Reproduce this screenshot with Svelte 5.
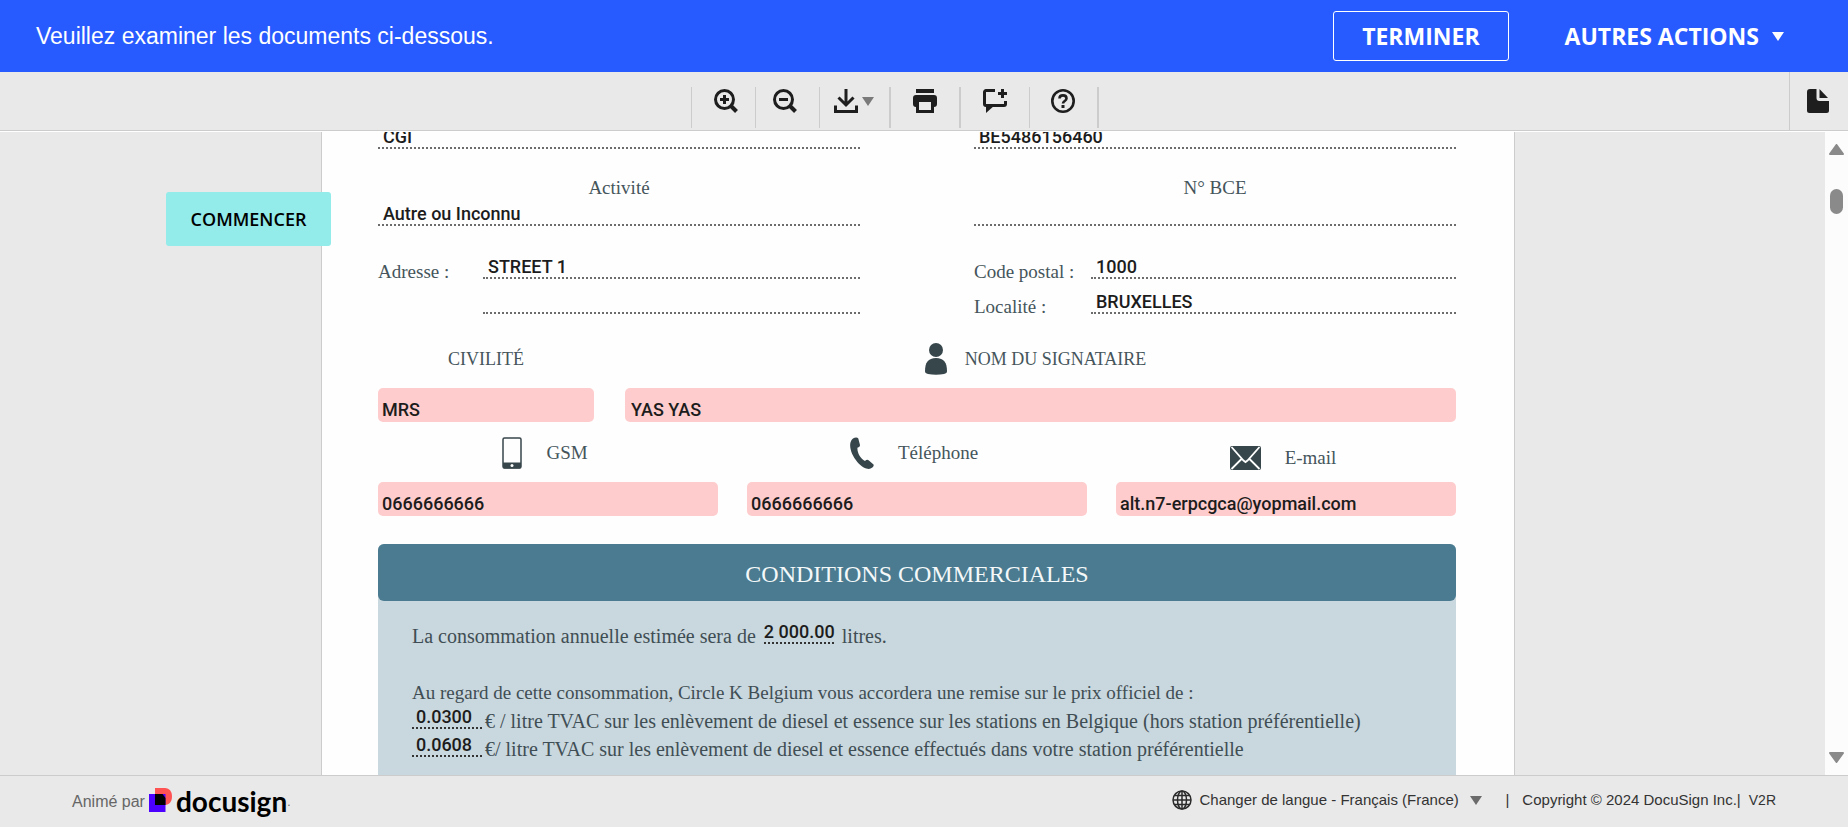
<script>
  const contacts = [
    { id: 'gsm', label: 'GSM', icon: 'mobile', type: 'tel', value: '0666666666' },
    { id: 'tel', label: 'Téléphone', icon: 'phone', type: 'tel', value: '0666666666' },
    { id: 'mail', label: 'E-mail', icon: 'mail', type: 'email', value: 'alt.n7-erpcgca@yopmail.com' }
  ];
</script>

<div class="app">
  <header class="banner">
    <p>Veuillez examiner les documents ci-dessous.</p>
    <div class="banner-actions">
      <button class="finish" type="button">TERMINER</button>
      <button class="more" type="button">
        AUTRES ACTIONS
        <svg width="12" height="9" viewBox="0 0 12 9" aria-hidden="true"><path d="M0 0h12L6 9z" fill="#fff" /></svg>
      </button>
    </div>
  </header>

  <div class="toolbar">
    <div class="tools">
      <button class="tool zoom-in" type="button" aria-label="Zoom avant">
        <svg width="24" height="24" viewBox="0 0 24 24" fill="none" stroke="#1e1e1e" stroke-width="3">
          <circle cx="10.500" cy="10.500" r="9" />
          <path d="M17 17l5.500 5.500" stroke-width="4" />
          <path d="M10.500 6v9M6 10.500h9" />
        </svg>
      </button>
      <button class="tool zoom-out" type="button" aria-label="Zoom arrière">
        <svg width="24" height="24" viewBox="0 0 24 24" fill="none" stroke="#1e1e1e" stroke-width="3">
          <circle cx="10.500" cy="10.500" r="9" />
          <path d="M17 17l5.500 5.500" stroke-width="4" />
          <path d="M6 10.500h9" />
        </svg>
      </button>
      <button class="tool wide" type="button" aria-label="Télécharger">
        <svg width="24" height="24" viewBox="0 0 24 24" fill="none" stroke="#1e1e1e" stroke-width="3">
          <path d="M1.500 16.500v6h21v-6" />
          <path d="M12 0v16M4.500 8.500l7.500 7.500 7.500-7.500" />
        </svg>
        <svg class="caret" width="12" height="9" viewBox="0 0 12 9"><path d="M0 0h12L6 9z" fill="#7a7a7a" /></svg>
      </button>
      <button class="tool wide" type="button" aria-label="Imprimer">
        <svg width="24" height="24" viewBox="0 0 24 24" fill="#1e1e1e">
          <path d="M3 0h18v4H3z" />
          <path fill-rule="evenodd" d="M3 6h18a3 3 0 0 1 3 3v6a3 3 0 0 1-3 3v6H3v-6a3 3 0 0 1-3-3V9a3 3 0 0 1 3-3zm3 7v8h12v-8z" />
        </svg>
      </button>
      <button class="tool wide" type="button" aria-label="Commentaire">
        <svg width="24" height="24" viewBox="0 0 24 24" fill="none" stroke="#1e1e1e" stroke-width="3">
          <path d="M12 1.500H3a1.500 1.500 0 0 0-1.500 1.500v12A1.500 1.500 0 0 0 3 16.500h18a1.500 1.500 0 0 0 1.500-1.500v-3" />
          <path d="M19.500 0v9M15 4.500h9" />
          <path d="M3 16h9l-9 8z" fill="#1e1e1e" stroke="none" />
        </svg>
      </button>
      <button class="tool wide last" type="button" aria-label="Aide">
        <svg width="24" height="24" viewBox="0 0 24 24" fill="none" stroke="#1e1e1e">
          <circle cx="12" cy="12" r="10.700" stroke-width="2.600" />
          <path d="M8.500 9.500c0-4.200 7-4.200 7 0 0 2.500-3.500 2.600-3.500 5" stroke-width="2.600" />
          <path d="M12 16v3" stroke-width="3" />
        </svg>
      </button>
    </div>
    <button class="panel-toggle" type="button" aria-label="Documents">
      <svg width="22" height="24" viewBox="0 0 22 24" fill="#1e1e1e">
        <path d="M3 0h6.500v9a3 3 0 0 0 3 3H22v9.500a2.500 2.500 0 0 1-2.500 2.500h-17A2.500 2.500 0 0 1 0 21.500V3a3 3 0 0 1 3-3z" />
        <path d="M12.500 0L21 9h-8.500z" />
      </svg>
    </button>
  </div>

  <main class="viewer">
    <div class="canvas">
      <aside class="gutter"><button class="start" type="button">COMMENCER</button></aside>

      <article class="page">
        <div class="pair first">
          <div class="field">CGI</div>
          <div class="field">BE5486156460</div>
        </div>
        <div class="pair headed">
          <div>
            <div class="label center">Activité</div>
            <div class="field">Autre ou Inconnu</div>
          </div>
          <div>
            <div class="label center">N° BCE</div>
            <div class="field"></div>
          </div>
        </div>
        <div class="pair address">
          <div class="lines street">
            <span class="label">Adresse :</span>
            <div class="field">STREET 1</div>
            <span></span>
            <div class="field"></div>
          </div>
          <div class="lines city">
            <span class="label">Code postal :</span>
            <div class="field">1000</div>
            <span class="label">Localité :</span>
            <div class="field">BRUXELLES</div>
          </div>
        </div>

        <div class="signer">
          <div class="entry">
            <label class="label caption" for="civ">CIVILITÉ</label>
            <input id="civ" readonly value="MRS" />
          </div>
          <div class="entry">
            <label class="label caption name" for="nom">
              <svg width="22" height="32" viewBox="0 0 22 32" fill="#37464b">
                <ellipse cx="11" cy="7" rx="7" ry="7" />
                <path d="M0 28c0-8 3-13 11-13s11 5 11 13c0 2-1 2.500-3 3-5 1-11 1-16 0-2-.5-3-1-3-3z" />
              </svg>
              NOM DU SIGNATAIRE
            </label>
            <input id="nom" class="inset" readonly value="YAS YAS" />
          </div>
        </div>

        <div class="contacts">
          {#each contacts as c}
            <div class="entry">
              <label class="label caption" class:low={c.icon === 'mail'} for={c.id}>
                {#if c.icon === 'mobile'}
                  <svg width="20" height="32" viewBox="0 0 20 32">
                    <rect x="1" y="1" width="18" height="30" rx="1.500" fill="none" stroke="#37464b" stroke-width="1.500" />
                    <path d="M1 25.500h18V30a1.500 1.500 0 0 1-1.500 1.500h-15A1.500 1.500 0 0 1 1 30z" fill="#37464b" />
                    <circle cx="10" cy="28.500" r="1.500" fill="#fff" />
                  </svg>
                {:else if c.icon === 'phone'}
                  <svg width="24" height="32" viewBox="0 0 24 32" fill="#37464b">
                    <path d="M3 1.500C5 .3 7.500.3 8.300 1.500L10 8c0 1.500-.8 2-2.600 2.700C7.200 16 10.500 21.500 15 24c1.300-1.300 2.600-1.600 3.900-.6l4.600 4.200c.8 1.200-.8 3.400-3.500 4.200-3.500.6-8.500-2-12.500-6.600C2.500 19.300-.3 12.500.2 7 .5 4.500 1.500 2.500 3 1.500z" />
                  </svg>
                {:else}
                  <svg width="31" height="24" viewBox="0 0 31 24">
                    <rect width="31" height="24" rx="2" fill="#37464b" />
                    <path d="M1.500 1l12 13.500 2 1.500 2-1.500L29.500 1M1.500 23l10.500-10.500M29.500 23L19 12.500" fill="none" stroke="#fff" stroke-width="1.800" />
                  </svg>
                {/if}
                {c.label}
              </label>
              <input id={c.id} type={c.type} readonly value={c.value} />
            </div>
          {/each}
        </div>

        <section class="terms">
          <h2>CONDITIONS COMMERCIALES</h2>
          <div class="terms-body">
            <p class="usage">La consommation annuelle estimée sera de <b>2 000.00</b> litres.</p>
            <p class="intro">Au regard de cette consommation, Circle K Belgium vous accordera une remise sur le prix officiel de :</p>
            <p class="rate"><b>0.0300</b> € / litre TVAC sur les enlèvement de diesel et essence sur les stations en Belgique (hors station préférentielle)</p>
            <p class="rate"><b>0.0608</b> €/ litre TVAC sur les enlèvement de diesel et essence effectués dans votre station préférentielle</p>
          </div>
        </section>
      </article>
    </div>

    <div class="scrollbar" aria-hidden="true">
      <svg width="15" height="11" viewBox="0 0 15 11"><path d="M7.500 1L14 10H1z" fill="#8a8a8a" stroke="#8a8a8a" stroke-width="2" stroke-linejoin="round" /></svg>
      <span class="thumb"></span>
      <svg class="down" width="15" height="11" viewBox="0 0 15 11"><path d="M7.500 10L14 1H1z" fill="#8a8a8a" stroke="#8a8a8a" stroke-width="2" stroke-linejoin="round" /></svg>
    </div>
  </main>

  <footer>
    <div class="powered">
      <span>Animé par</span>
      <svg width="23" height="24" viewBox="0 0 23 24">
        <path d="M6 0h10c4.500 0 7 3.600 7 8.500S20.500 17 16 17H6z" fill="#ff5252" />
        <path d="M0 6h16.500v18H0z" fill="#4c00ff" />
        <path d="M6 6h7.500l3 4v7H6z" fill="#000" />
      </svg>
      <strong>docusign</strong><span class="mark">.</span>
    </div>
    <div class="legal">
      <label class="language">
        <svg width="20" height="20" viewBox="0 0 20 20" fill="none" stroke="#2b2b2b" stroke-width="1.500">
          <circle cx="10" cy="10" r="9" />
          <ellipse cx="10" cy="10" rx="4.500" ry="9" />
          <path d="M10 1v18M1 10h18M2.500 5.500h15M2.500 14.500h15" />
        </svg>
        <select aria-label="Changer de langue">
          <option>Changer de langue - Français (France)</option>
        </select>
        <svg width="12" height="9" viewBox="0 0 12 9"><path d="M0 0h12L6 9z" fill="#6b6b6b" /></svg>
      </label>
      <span class="bar">|</span>
      <span>Copyright © 2024 DocuSign Inc.|</span>
      <small>V2R</small>
    </div>
  </footer>
</div>

<style>
  :global(body) {
    margin: 0;
  }

  .app {
    display: flex;
    flex-direction: column;
    height: 100vh;
    overflow: hidden;
    background: #e9e9e9;
    font-family: 'Liberation Sans', Arial, sans-serif;
    color: #333;
  }

  .app * {
    box-sizing: border-box;
  }

  svg {
    display: block;
    flex: none;
  }

  button {
    border: 0;
    padding: 0;
    background: none;
    cursor: pointer;
  }

  .banner {
    display: flex;
    align-items: center;
    justify-content: space-between;
    flex: none;
    height: 72px;
    padding: 0 64px 0 36px;
    background: #285bff;
    color: #fff;
  }

  .banner p {
    margin: 0;
    font-size: 23px;
    line-height: 28px;
  }

  .banner-actions {
    display: flex;
    gap: 56px;
  }

  .banner button {
    height: 50px;
    color: #fff;
    font: 700 23px/28px 'Open Sans', 'Noto Sans', sans-serif;
  }

  .banner .finish {
    padding: 0 28px;
    border: 1px solid #fff;
    border-radius: 3px;
  }

  .more {
    display: flex;
    align-items: center;
    gap: 13px;
  }

  .toolbar {
    display: flex;
    flex: none;
    height: 60px;
    border-bottom: 1px solid #fff;
    box-shadow: inset 0 -1px #ccc;
  }

  .tools {
    display: flex;
    flex: 1;
    justify-content: center;
    padding: 15px 0 3px;
  }

  .tool {
    display: flex;
    align-items: flex-start;
    justify-content: center;
    gap: 4px;
    width: 64px;
    padding-top: 2px;
    border-left: 1px solid #ccc;
  }

  .zoom-in {
    padding-left: 5px;
  }

  .zoom-out {
    padding-right: 5px;
  }

  .wide {
    width: 70px;
  }

  .wide + .wide {
    border-left-width: 2px;
  }

  .tool.last {
    border-right: 2px solid #ccc;
    border-left-width: 1px;
  }

  .caret {
    margin-top: 8px;
  }

  .panel-toggle {
    display: flex;
    justify-content: center;
    width: 59px;
    padding: 17px 2px 0 0;
    border-left: 1px solid #ccc;
  }

  .viewer {
    display: flex;
    flex: 1;
    min-height: 0;
  }

  .canvas {
    display: grid;
    flex: 1;
    grid-template-columns: minmax(0, 1fr) minmax(0, 1194px) minmax(0, 1fr);
    padding-left: 11px;
    overflow: hidden;
  }

  .gutter {
    position: relative;
    z-index: 1;
  }

  .start {
    position: absolute;
    top: 60px;
    right: -10px;
    width: 165px;
    height: 54px;
    border-radius: 3px;
    background: #93ebea;
    color: #000;
    font: 600 18px/24px 'Open Sans', 'Noto Sans', sans-serif;
  }

  .page {
    min-height: 0;
    padding: 0 58px 0 56px;
    border: solid #ccc;
    border-width: 0 1px;
    background: #fefefe;
    overflow: hidden;
  }

  .label {
    color: #45555b;
    font: 19px/24px 'Liberation Serif', 'Times New Roman', serif;
    white-space: nowrap;
  }

  .center {
    text-align: center;
  }

  .field {
    height: 23px;
    padding-left: 5px;
    border-bottom: 2px dotted #6c6c6c;
    color: #1c1c1c;
    font: 500 18px/21px Roboto, sans-serif;
  }

  .pair {
    display: grid;
    grid-template-columns: 1fr 1fr;
    gap: 114px;
  }

  .first {
    margin-top: -6px;
  }

  .headed {
    margin-top: 27px;
  }

  .headed .label {
    margin-bottom: 3px;
  }

  .address {
    margin-top: 30px;
  }

  .lines {
    display: grid;
    grid-template-rows: 23px 23px;
    row-gap: 12px;
  }

  .lines .label {
    padding-top: 4px;
  }

  .street {
    grid-template-columns: 105px 1fr;
  }

  .city {
    grid-template-columns: 117px 1fr;
  }

  .signer {
    display: grid;
    grid-template-columns: 216px 1fr;
    gap: 31px;
    margin-top: 28px;
  }

  .signer .label {
    font-size: 18px;
  }

  .caption {
    display: flex;
    align-items: center;
    justify-content: center;
    gap: 24px;
    height: 34px;
    margin-bottom: 12px;
  }

  .caption.name {
    gap: 18px;
    padding-right: 10px;
  }

  .contacts .caption {
    padding-right: 6px;
  }

  .caption.low {
    align-items: flex-end;
  }

  input {
    display: block;
    width: 100%;
    height: 34px;
    padding: 9px 4px 0;
    border: 0;
    border-radius: 5px;
    outline: 0;
    background: #fecccc;
    color: #1c1c1c;
    font: 500 18px/21px Roboto, sans-serif;
  }

  input.inset {
    padding-left: 6px;
  }

  .contacts {
    display: grid;
    grid-template-columns: repeat(3, 1fr);
    gap: 29px;
    margin-top: 14px;
  }

  .terms {
    margin-top: 28px;
    border-radius: 6px 6px 0 0;
    background: #c9d7de;
  }

  h2 {
    margin: 0;
    padding-top: 3px;
    border-radius: 6px;
    background: #4a7b90;
    color: #f4f8f9;
    text-align: center;
    font: 24px/54px 'Liberation Serif', 'Times New Roman', serif;
  }

  .terms-body {
    padding: 21px 34px 32px;
  }

  .terms p {
    display: flex;
    align-items: flex-start;
    gap: 8px;
    margin: 0;
    color: #3f4e54;
    font: 20px/28px 'Liberation Serif', 'Times New Roman', serif;
    white-space: nowrap;
  }

  .terms .usage {
    margin-bottom: 29px;
  }

  .terms .intro {
    font-size: 19px;
  }

  .terms .rate {
    gap: 3px;
  }

  .terms b {
    flex: none;
    width: 70px;
    border-bottom: 2px dotted #333;
    color: #1c1c1c;
    text-align: center;
    font: 500 18px/20px Roboto, sans-serif;
  }

  .terms .rate b {
    padding-right: 6px;
  }

  .scrollbar {
    display: flex;
    flex: none;
    flex-direction: column;
    align-items: center;
    width: 23px;
    padding: 12px 0;
    background: #fcfcfc;
  }

  .thumb {
    width: 13px;
    height: 25px;
    margin-top: 34px;
    border-radius: 7px;
    background: #8a8a8a;
  }

  .down {
    margin-top: auto;
  }

  footer {
    display: flex;
    align-items: flex-start;
    justify-content: space-between;
    flex: none;
    height: 52px;
    padding: 12px 72px 0;
    border-top: 1px solid #ccc;
  }

  .powered {
    display: flex;
    color: #666;
    font-size: 16px;
    line-height: 28px;
    gap: 4px;
  }

  .powered strong {
    color: #000;
    font: 700 28px/26px Lato, sans-serif;
  }

  .mark {
    margin-left: -4px;
    font-size: 12px;
  }

  .legal {
    display: flex;
    align-items: center;
    height: 24px;
    font-size: 15px;
    line-height: 24px;
  }

  .language {
    display: flex;
    align-items: center;
    gap: 7px;
  }

  select {
    appearance: none;
    margin: 0 4px 0 0;
    padding: 0;
    border: 0;
    background: none;
    color: inherit;
    font: inherit;
  }

  .bar {
    margin: 0 13px 0 23px;
  }

  small {
    margin-left: 8px;
    font-size: 14px;
  }
</style>
